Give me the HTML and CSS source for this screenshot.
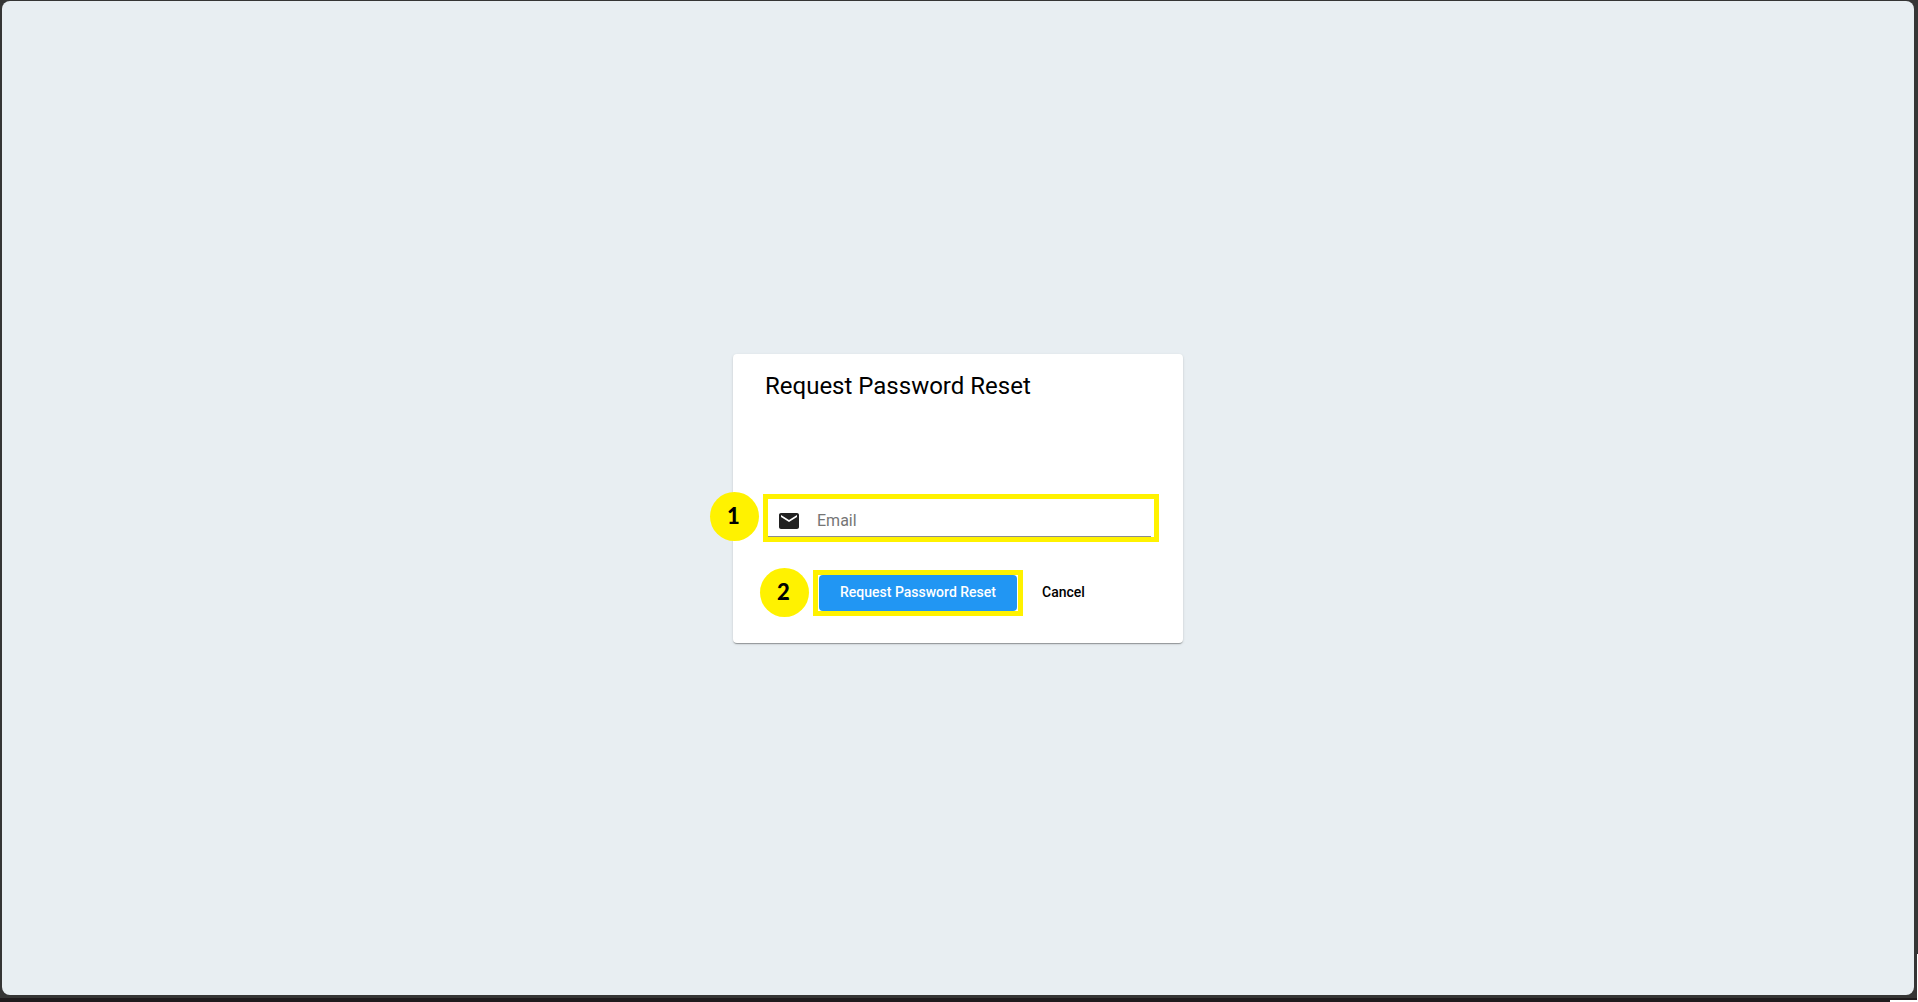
FILE: index.html
```
<!DOCTYPE html>
<html lang="en">
<head>
    <meta charset="UTF-8">
    <meta name="viewport" content="width=device-width, initial-scale=1.0">
    <title>Request Password Reset</title>
    <link rel="stylesheet" href="styles.css">
</head>
<body>
    <main class="window">
        <form class="card">
            <h1>Request Password Reset</h1>

            <div class="step email-step">
                <span class="badge">1</span>
                <div class="field">
                    <label for="email" aria-label="Email">
                        <svg class="mail-icon" viewBox="0 0 24 24" aria-hidden="true">
                            <path d="M20 4H4c-1.1 0-1.99.9-1.99 2L2 18c0 1.1.9 2 2 2h16c1.1 0 2-.9 2-2V6c0-1.1-.9-2-2-2zm0 4l-8 5-8-5V6l8 5 8-5v2z"/>
                        </svg>
                    </label>
                    <input type="email" id="email" placeholder="Email">
                </div>
            </div>

            <div class="actions">
                <div class="step submit-step">
                    <span class="badge">2</span>
                    <button type="submit" class="submit-btn">Request Password Reset</button>
                </div>
                <button type="button" class="cancel-btn">Cancel</button>
            </div>
        </form>
    </main>
    <div class="edge-right"></div>
    <div class="edge-bottom"></div>
</body>
</html>
```

FILE: styles.css
```
/* General Styles */
* {
    box-sizing: border-box;
}

body {
    margin: 0;
    height: 100vh;
    padding: 1px 4px 7px 2px;
    background: linear-gradient(to top, #1f1b1d 4px, #353535 4px);
    font-family: Roboto, sans-serif;
    color: #000;
    overflow: hidden;
}

.window {
    height: 100%;
    display: flex;
    align-items: center;
    justify-content: center;
    background-color: #e8eef2;
    border-radius: 8px;
}

/* Card */
.card {
    width: 100%;
    max-width: 450px;
    padding: 16px 24px 27px 30px;
    background-color: #fff;
    border-radius: 4px;
    box-shadow: 0 2px 1px -1px rgba(0, 0, 0, 0.2), 0 1px 1px rgba(0, 0, 0, 0.14), 0 1px 3px rgba(0, 0, 0, 0.12);
}

h1 {
    margin: 0 0 92px;
    padding-left: 2px;
    font-size: 24px;
    font-weight: 400;
    line-height: 32px;
}

/* Highlighted steps */
.step {
    position: relative;
    border: 5px solid #fff200;
}

.badge {
    position: absolute;
    right: 100%;
    top: -7px;
    width: 49px;
    height: 49px;
    margin-right: 9px;
    padding-right: 2px;
    border-radius: 50%;
    background-color: #fff200;
    font-family: Lato, sans-serif;
    font-size: 22px;
    font-weight: 900;
    line-height: 48px;
    text-align: center;
}

/* Email field */
.field {
    display: flex;
    align-items: center;
    height: 38px;
    margin-right: 3px;
    padding: 7px 0 0 9px;
    border-bottom: 1px solid #8c8c8c;
}

.field label {
    display: flex;
}

.mail-icon {
    width: 24px;
    height: 24px;
    fill: #212121;
}

.field input {
    flex: 1;
    min-width: 0;
    margin-left: 16px;
    padding: 0;
    border: 0;
    outline: 0;
    background: none;
    font-family: inherit;
    font-size: 16px;
    line-height: 24px;
}

.field input::placeholder {
    color: #757575;
}

/* Buttons */
.actions {
    display: flex;
    align-items: center;
    gap: 3px;
    margin: 28px 0 0 50px;
}

.submit-step {
    padding: 0 1px;
}

button {
    height: 36px;
    padding: 0 16px 2px;
    border: 0;
    border-radius: 4px;
    background: none;
    font-family: inherit;
    font-size: 14px;
    font-weight: 500;
    color: #000;
    cursor: pointer;
}

.submit-btn {
    display: block;
    min-width: 198px;
    background-color: #2196f3;
    color: #fff;
}

/* Bits of the desktop behind the window */
.edge-right {
    position: absolute;
    right: 0;
    bottom: 0;
    width: 1px;
    height: 48px;
    background-color: #fff;
}

.edge-bottom {
    position: absolute;
    right: 0;
    bottom: 0;
    width: 28px;
    height: 2px;
    background-color: #fff;
}
```
